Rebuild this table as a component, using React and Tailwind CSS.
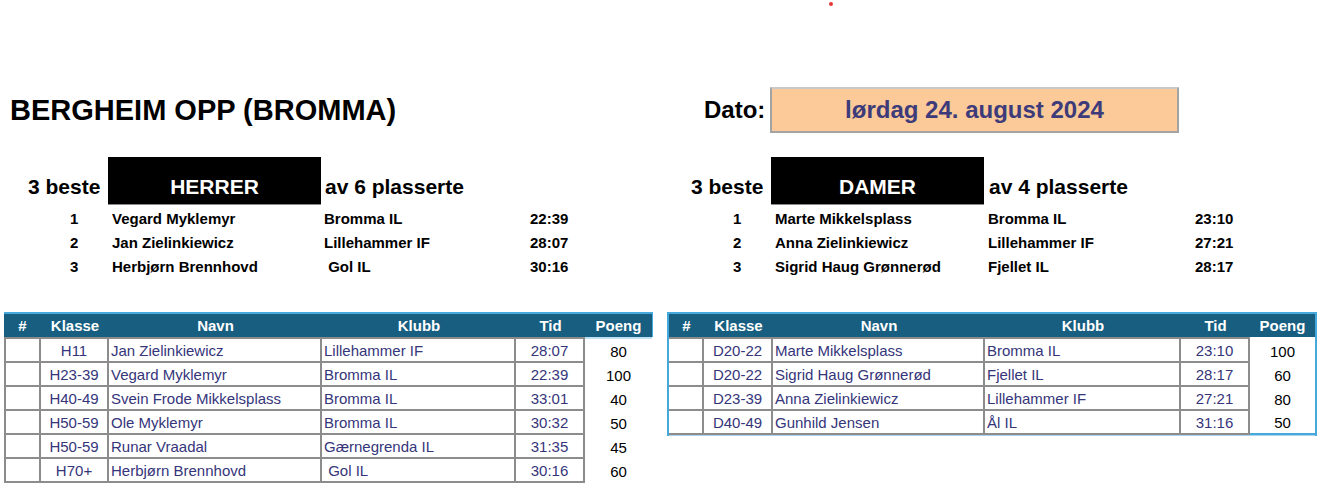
import React from "react";

const leftRows = [
  ["H11", "Jan Zielinkiewicz", "Lillehammer IF", "28:07", "80"],
  ["H23-39", "Vegard Myklemyr", "Bromma IL", "22:39", "100"],
  ["H40-49", "Svein Frode Mikkelsplass", "Bromma IL", "33:01", "40"],
  ["H50-59", "Ole Myklemyr", "Bromma IL", "30:32", "50"],
  ["H50-59", "Runar Vraadal", "Gærnegrenda IL", "31:35", "45"],
  ["H70+", "Herbjørn Brennhovd", " Gol IL", "30:16", "60"],
];

const rightRows = [
  ["D20-22", "Marte Mikkelsplass", "Bromma IL", "23:10", "100"],
  ["D20-22", "Sigrid Haug Grønnerød", "Fjellet IL", "28:17", "60"],
  ["D23-39", "Anna Zielinkiewicz", "Lillehammer IF", "27:21", "80"],
  ["D40-49", "Gunhild Jensen", "Ål IL", "31:16", "50"],
];

function Podium({ rows, numW, numPl, nameW, clubW }) {
  return (
    <div className="mt-[2px] flex flex-col">
      {rows.map((r, i) => (
        <div key={i} className="flex h-[24px] items-center text-[15px] font-bold leading-[24px] text-black">
          <div style={{ width: numW, paddingLeft: numPl }}>{i + 1}</div>
          <div style={{ width: nameW }}>{r[0]}</div>
          <div style={{ width: clubW }} className="whitespace-pre">{r[1]}</div>
          <div>{r[2]}</div>
        </div>
      ))}
    </div>
  );
}

function SectionHead({ padL, labelW, title, after, afterPl }) {
  return (
    <div className="flex h-[48px] items-end">
      <div className="pb-[8px] text-[21px] font-bold leading-none text-black" style={{ width: labelW, paddingLeft: padL }}>
        3 beste
      </div>
      <div className="flex h-[48px] w-[213px] items-end justify-center border-b border-[#8a8a8a] bg-black pb-[7px] text-[21px] font-bold leading-none text-white">
        {title}
      </div>
      <div className="pb-[8px] text-[21px] font-bold leading-none text-black" style={{ paddingLeft: afterPl }}>
        {after}
      </div>
    </div>
  );
}

const cellBase = "flex items-center border-r-2 border-b-2 border-[#8c8c8c] text-[15px] text-[#35357a] leading-none";

function LeftTable() {
  return (
    <div className="ml-[4px] w-[649px]">
      <div className="flex h-[25px] items-center border-t-2 border-r border-[#45a9dc] bg-[#175e80] text-[15px] font-bold leading-none text-white">
        <div className="w-[37px] text-center">#</div>
        <div className="w-[68px] text-center">Klasse</div>
        <div className="w-[213px] text-center">Navn</div>
        <div className="w-[194px] text-center">Klubb</div>
        <div className="w-[69px] text-center">Tid</div>
        <div className="w-[67px] text-center">Poeng</div>
      </div>
      <div className="flex flex-col">
        {leftRows.map((r, i) => {
          const first = i === 0;
          const c = `${cellBase} ${first ? "border-t-2" : ""}`;
          return (
            <div key={i} className={`flex ${first ? "h-[26px]" : "h-[24px]"}`}>
              <div className={`${c} w-[37px] border-l-2`}></div>
              <div className={`${c} w-[68px] justify-center`}>{r[0]}</div>
              <div className={`${c} w-[213px] pl-[2px]`}>{r[1]}</div>
              <div className={`${c} w-[194px] whitespace-pre pl-[2px]`}>{r[2]}</div>
              <div className={`${c} w-[69px] justify-center`}>{r[3]}</div>
              <div className={`flex w-[67px] items-center justify-center text-[15px] leading-none text-black ${first ? "border-t-2 border-[#bfe0f1]" : ""}`}>{r[4]}</div>
            </div>
          );
        })}
      </div>
    </div>
  );
}

function RightTable() {
  return (
    <div className="ml-[14px] w-[650px] border-x-2 border-t-2 border-[#45a9dc]">
      <div className="flex h-[23px] items-center bg-[#175e80] text-[15px] font-bold leading-none text-white">
        <div className="w-[35px] text-center">#</div>
        <div className="w-[69px] text-center">Klasse</div>
        <div className="w-[212px] text-center">Navn</div>
        <div className="w-[196px] text-center">Klubb</div>
        <div className="w-[69px] text-center">Tid</div>
        <div className="w-[65px] text-center">Poeng</div>
      </div>
      <div className="flex flex-col border-b border-[#a9d6ee]">
        {rightRows.map((r, i) => {
          const first = i === 0;
          const c = `${cellBase} ${first ? "border-t-2" : ""}`;
          return (
            <div key={i} className={`flex ${first ? "h-[26px]" : "h-[24px]"}`}>
              <div className={`${c} w-[35px]`}></div>
              <div className={`${c} w-[69px] justify-center`}>{r[0]}</div>
              <div className={`${c} w-[212px] pl-[2px]`}>{r[1]}</div>
              <div className={`${c} w-[196px] pl-[2px]`}>{r[2]}</div>
              <div className={`${c} w-[69px] justify-center`}>{r[3]}</div>
              <div className={`flex w-[65px] items-center justify-center text-[15px] leading-none text-black ${first ? "border-t-2 border-white" : ""} ${i === rightRows.length - 1 ? "border-b-2 border-[#45a9dc]" : ""}`}>{r[4]}</div>
            </div>
          );
        })}
      </div>
    </div>
  );
}

export default function App() {
  return (
    <div className="relative h-[490px] w-[1317px] overflow-hidden bg-white font-['Liberation_Sans',Arial,sans-serif]">
      <div className="absolute left-[829px] top-[2px] h-[4px] w-[4px] rounded-full bg-[#e53935]" />

      <div className="mt-[87px] flex h-[46px] items-center">
        <div className="w-[704px] pl-[10px] text-[29px] font-bold leading-none text-black">BERGHEIM OPP (BROMMA)</div>
        <div className="w-[66px] text-[24px] font-bold leading-none text-black">Dato:</div>
        <div className="flex h-[46px] w-[409px] items-center justify-center border-2 border-[#a3a3a3] border-t-[#c9c9c9] bg-[#fbca98] text-[24px] font-bold leading-none text-[#3d3b7a]">
          lørdag 24. august 2024
        </div>
      </div>

      <div className="mt-[24px] flex">
        <div className="w-[667px]">
          <SectionHead padL={28} labelW={108} title="HERRER" after="av 6 plasserte" afterPl={4} />
          <Podium
            rows={[
              ["Vegard Myklemyr", "Bromma IL", "22:39"],
              ["Jan Zielinkiewicz", "Lillehammer IF", "28:07"],
              ["Herbjørn Brennhovd", " Gol IL", "30:16"],
            ]}
            numW={112}
            numPl={70}
            nameW={212}
            clubW={206}
          />
        </div>
        <div className="flex-1 pl-[24px]">
          <SectionHead padL={0} labelW={80} title="DAMER" after="av 4 plasserte" afterPl={5} />
          <Podium
            rows={[
              ["Marte Mikkelsplass", "Bromma IL", "23:10"],
              ["Anna Zielinkiewicz", "Lillehammer IF", "27:21"],
              ["Sigrid Haug Grønnerød", "Fjellet IL", "28:17"],
            ]}
            numW={84}
            numPl={42}
            nameW={213}
            clubW={207}
          />
        </div>
      </div>

      <div className="mt-[33px] flex items-start">
        <LeftTable />
        <RightTable />
      </div>
    </div>
  );
}
